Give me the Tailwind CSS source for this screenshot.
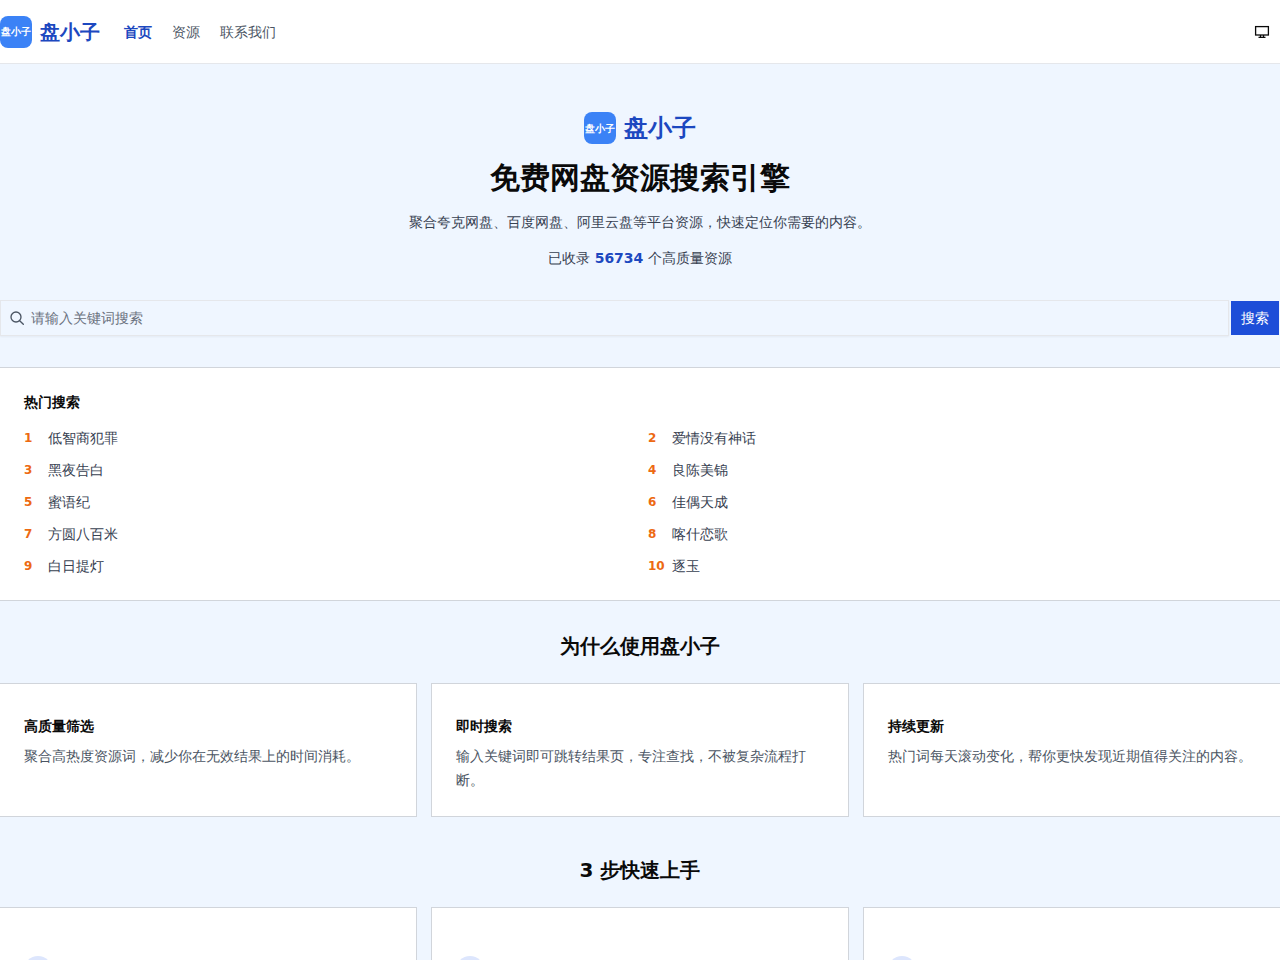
<!DOCTYPE html>
<html lang="en">
<head>
    <meta charset="UTF-8">
    <title>盘小子</title>
    <script src="https://cdn.jsdelivr.net/npm/@tailwindcss/browser@4"></script>
</head>
<body class="bg-[#eff6ff] text-[#0a0a0a] font-['DejaVu_Sans',sans-serif]">

    <!-- Header -->
    <header class="h-16 bg-white border-b border-[#e5e7eb] flex items-center justify-between">
        <div class="flex items-center">
            <div class="flex items-center gap-2">
                <div class="w-8 h-8 bg-[#3b82f6] rounded-lg flex items-center justify-center text-white text-[10px] font-bold whitespace-nowrap">盘小子</div>
                <span class="text-xl font-bold text-[#1c48c0]">盘小子</span>
            </div>
            <nav class="flex items-center gap-5 ml-6 text-sm text-[#4b5563]">
                <a href="#" class="font-bold text-[#1c48c0]">首页</a>
                <a href="#">资源</a>
                <a href="#">联系我们</a>
            </nav>
        </div>
        <button class="w-4 h-4 mr-[10px] flex items-center justify-center">
            <svg class="w-4 h-4" viewBox="0 0 16 16" fill="none" stroke="currentColor" stroke-width="1.3">
                <rect x="1.6" y="2.6" width="12.8" height="8.4"></rect>
                <path d="M6.5 11v2.4M9.5 11v2.4M4.5 13.4h7"></path>
            </svg>
        </button>
    </header>

    <!-- Hero -->
    <section class="pt-12 pb-[31px] text-center border-b border-[#d1d5db]">
        <div class="flex items-center justify-center gap-2">
            <div class="w-8 h-8 bg-[#3b82f6] rounded-lg flex items-center justify-center text-white text-[10px] font-bold whitespace-nowrap">盘小子</div>
            <span class="text-2xl font-bold text-[#1c48c0]">盘小子</span>
        </div>
        <h1 class="mt-4 text-3xl leading-9 font-bold">免费网盘资源搜索引擎</h1>
        <p class="mt-4 text-sm text-[#374151]">聚合夸克网盘、百度网盘、阿里云盘等平台资源，快速定位你需要的内容。</p>
        <p class="mt-4 text-sm text-[#374151]">已收录 <span class="font-bold text-[#1c48c0]">56734</span> 个高质量资源</p>
        <form class="mt-8 flex items-center gap-px pr-px">
            <div class="relative flex-1">
                <svg class="absolute left-[9px] top-[10px] w-4 h-4 text-[#4b5563]" viewBox="0 0 24 24" fill="none" stroke="currentColor" stroke-width="2" stroke-linecap="round">
                    <circle cx="10.5" cy="10.5" r="7.5"></circle>
                    <path d="M16 16l5.5 5.5"></path>
                </svg>
                <input type="text" placeholder="请输入关键词搜索" class="w-full h-9 pl-[30px] pr-3 bg-[#eff6ff] border border-[#e5e7eb] shadow-xs text-sm placeholder:text-[#6b7280] outline-none">
            </div>
            <button type="button" class="w-12 h-[34px] ml-px bg-[#1d4ed8] text-white text-sm">搜索</button>
        </form>
    </section>

    <!-- Hot searches -->
    <section class="bg-white border-b border-[#d1d5db] px-6 pt-6 pb-[18px]">
        <h2 class="text-sm font-bold">热门搜索</h2>
        <ul class="mt-2.5 grid grid-cols-2 gap-x-4 text-sm text-[#374151]">
            <li class="h-8 flex items-center"><span class="w-6 text-xs font-bold text-[#ed6a12]">1</span>低智商犯罪</li>
            <li class="h-8 flex items-center"><span class="w-6 text-xs font-bold text-[#ed6a12]">2</span>爱情没有神话</li>
            <li class="h-8 flex items-center"><span class="w-6 text-xs font-bold text-[#ed6a12]">3</span>黑夜告白</li>
            <li class="h-8 flex items-center"><span class="w-6 text-xs font-bold text-[#ed6a12]">4</span>良陈美锦</li>
            <li class="h-8 flex items-center"><span class="w-6 text-xs font-bold text-[#ed6a12]">5</span>蜜语纪</li>
            <li class="h-8 flex items-center"><span class="w-6 text-xs font-bold text-[#ed6a12]">6</span>佳偶天成</li>
            <li class="h-8 flex items-center"><span class="w-6 text-xs font-bold text-[#ed6a12]">7</span>方圆八百米</li>
            <li class="h-8 flex items-center"><span class="w-6 text-xs font-bold text-[#ed6a12]">8</span>喀什恋歌</li>
            <li class="h-8 flex items-center"><span class="w-6 text-xs font-bold text-[#ed6a12]">9</span>白日提灯</li>
            <li class="h-8 flex items-center"><span class="w-6 text-xs font-bold text-[#ed6a12]">10</span>逐玉</li>
        </ul>
    </section>

    <!-- Why -->
    <section class="pt-[31px]">
        <h2 class="text-xl leading-7 font-bold text-center">为什么使用盘小子</h2>
        <div class="mt-[23px] grid grid-cols-3 gap-3.5">
            <div class="bg-white border border-l-0 border-[#d1d5db] px-6 pt-8 pb-6">
                <h3 class="text-sm font-bold">高质量筛选</h3>
                <p class="mt-2 text-sm leading-6 text-[#4b5563]">聚合高热度资源词，减少你在无效结果上的时间消耗。</p>
            </div>
            <div class="bg-white border border-[#d1d5db] px-6 pt-8 pb-6">
                <h3 class="text-sm font-bold">即时搜索</h3>
                <p class="mt-2 text-sm leading-6 text-[#4b5563]">输入关键词即可跳转结果页，专注查找，不被复杂流程打断。</p>
            </div>
            <div class="bg-white border border-r-0 border-[#d1d5db] px-6 pt-8 pb-6">
                <h3 class="text-sm font-bold">持续更新</h3>
                <p class="mt-2 text-sm leading-6 text-[#4b5563]">热门词每天滚动变化，帮你更快发现近期值得关注的内容。</p>
            </div>
        </div>
    </section>

    <!-- Steps -->
    <section class="pt-[39px] pb-8">
        <h2 class="text-xl leading-7 font-bold text-center">3 步快速上手</h2>
        <div class="mt-[23px] grid grid-cols-3 gap-3.5">
            <div class="bg-white border border-l-0 border-[#d1d5db] px-6 pt-12 pb-6">
                <div class="w-7 h-7 rounded-full bg-[#dde6fd]"></div>
            </div>
            <div class="bg-white border border-[#d1d5db] px-6 pt-12 pb-6">
                <div class="w-7 h-7 rounded-full bg-[#dde6fd]"></div>
            </div>
            <div class="bg-white border border-r-0 border-[#d1d5db] px-6 pt-12 pb-6">
                <div class="w-7 h-7 rounded-full bg-[#dde6fd]"></div>
            </div>
        </div>
    </section>

</body>
</html>
